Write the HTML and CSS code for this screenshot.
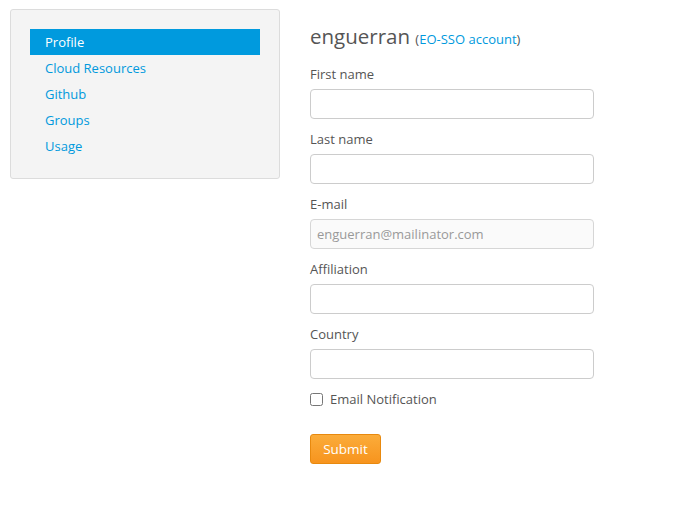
FILE: index.html
```html
<!DOCTYPE html>
<html>
<head>
<meta charset="utf-8">
<link rel="stylesheet" href="styles.css">
</head>
<body>
<div class="page">
  <aside class="sidebar">
    <ul class="nav">
      <li><a class="active" href="#">Profile</a></li>
      <li><a href="#">Cloud Resources</a></li>
      <li><a href="#">Github</a></li>
      <li><a href="#">Groups</a></li>
      <li><a href="#">Usage</a></li>
    </ul>
  </aside>
  <main class="content">
    <h1 class="title">enguerran <span class="sub">(<a href="#">EO-SSO account</a>)</span></h1>
    <form class="form">
      <label class="label">First name</label>
      <input class="input" type="text">
      <label class="label">Last name</label>
      <input class="input" type="text">
      <label class="label">E-mail</label>
      <input class="input disabled" type="text" value="enguerran@mailinator.com" disabled>
      <label class="label">Affiliation</label>
      <input class="input" type="text">
      <label class="label">Country</label>
      <input class="input" type="text">
      <label class="check"><input type="checkbox" class="cb"> Email Notification</label>
      <button type="button" class="submit">Submit</button>
    </form>
  </main>
</div>
</body>
</html>
```
FILE: styles.css
```css
* { box-sizing: border-box; }
body {
  margin: 0;
  font-family: "Open Sans", "DejaVu Sans", sans-serif;
  font-size: 13px;
  color: #555;
  background: #fff;
}
.page {
  display: flex;
  align-items: flex-start;
  padding: 9px 10px;
  gap: 30px;
}
.sidebar {
  width: 270px;
  height: 170px;
  background: #f4f4f4;
  border: 1px solid #dcdcdc;
  border-radius: 3px;
  padding: 19px 19px;
}
.nav { list-style: none; margin: 0; padding: 0; }
.nav a {
  display: block;
  height: 26px;
  line-height: 26px;
  padding-left: 15px;
  color: #0099dd;
  text-decoration: none;
}
.nav a.active { background: #009ade; color: #fff; }
.content { width: 284px; padding-top: 13px; }
.title {
  margin: 0 0 11px;
  font-size: 20.5px;
  font-weight: normal;
  color: #555;
  line-height: 28px;
}
.sub { font-size: 13px; color: #555; }
.sub a { color: #0099dd; text-decoration: none; }
.form { display: flex; flex-direction: column; }
.label { line-height: 20px; margin-bottom: 5px; }
.input {
  width: 284px;
  height: 30px;
  border: 1px solid #ccc;
  border-radius: 4px;
  margin-bottom: 10px;
  padding: 0 6px;
  font-family: inherit;
  font-size: 13px;
  color: #555;
  background: #fff;
}
.input.disabled { background: #fafafa; border-color: #d6d6d6; color: #999; }
.check { display: flex; align-items: center; gap: 7px; line-height: 20px; }
.cb { margin: 0; width: 13px; height: 13px; }
.submit {
  align-self: flex-start;
  margin-top: 25px;
  width: 71px;
  height: 30px;
  border: 1px solid #e8890e;
  border-radius: 3px;
  background: linear-gradient(#fbac3a, #f7941e);
  color: #fff;
  font-family: inherit;
  font-size: 13.5px;
}
```
